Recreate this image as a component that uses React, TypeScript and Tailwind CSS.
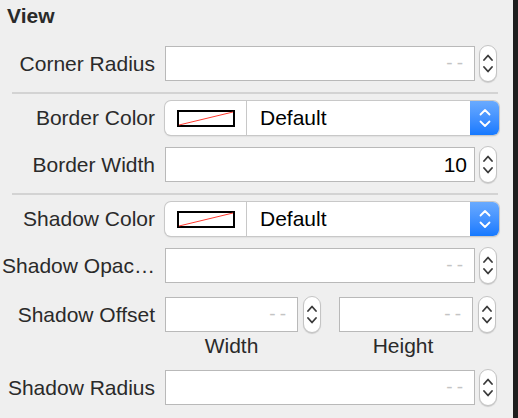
import React from "react"

const font = { fontFamily: '"Liberation Sans", Arial, sans-serif' }

function Stepper() {
  return (
    <div className="flex h-[37px] w-[18px] flex-col items-center justify-center gap-[5px] rounded-full border border-[#c4c4c4] bg-white shadow-[0_1px_1px_rgba(0,0,0,0.15)]">
      <svg width="10" height="7" viewBox="0 0 10 7">
        <path d="M1 6 L5 1.5 L9 6" fill="none" stroke="#3a3a3a" strokeWidth="1.8" strokeLinecap="round" strokeLinejoin="round" />
      </svg>
      <svg width="10" height="7" viewBox="0 0 10 7">
        <path d="M1 1 L5 5.5 L9 1" fill="none" stroke="#3a3a3a" strokeWidth="1.8" strokeLinecap="round" strokeLinejoin="round" />
      </svg>
    </div>
  )
}

function Field({ value, width = "w-[310px]" }: { value?: string; width?: string }) {
  return (
    <div className={`${width} flex h-[35px] items-center justify-end border border-[#b9b9b9] bg-white pr-[7px]`}>
      {value ? (
        <span className="text-[21px] text-black">{value}</span>
      ) : (
        <span className="text-[19px] tracking-[4px] text-[#c4c4c4]">--</span>
      )}
    </div>
  )
}

function Label({ text }: { text: string }) {
  return (
    <div className="w-[153px] shrink-0 whitespace-nowrap text-right text-[21px] text-[#2a2a2a]">{text}</div>
  )
}

function NumberRow({ label, value, className = "" }: { label: string; value?: string; className?: string }) {
  return (
    <div className={`flex items-center ${className}`}>
      <Label text={label} />
      <div className="ml-[10px] flex items-center gap-[4px]">
        <Field value={value} />
        <Stepper />
      </div>
    </div>
  )
}

function ColorRow({ label, className = "" }: { label: string; className?: string }) {
  return (
    <div className={`flex items-center ${className}`}>
      <Label text={label} />
      <div className="ml-[10px] flex h-[34px] w-[334px] rounded-[6px] bg-white shadow-[0_0_0_1px_#c8c8c8,0_1px_2px_rgba(0,0,0,0.2)]">
        <div className="flex w-[82px] items-center justify-center border-r border-[#c8c8c8]">
          <svg width="58" height="17" viewBox="0 0 58 17">
            <rect x="1" y="1" width="56" height="15" fill="white" stroke="black" strokeWidth="2" />
            <line x1="2" y1="15" x2="56" y2="2" stroke="#ff3b30" strokeWidth="1" />
          </svg>
        </div>
        <div className="flex flex-1 items-center pl-[13px] text-[21px] text-black">Default</div>
        <div className="flex w-[29px] flex-col items-center justify-center gap-[4px] rounded-r-[6px] bg-gradient-to-b from-[#69aafe] to-[#1479ff]">
          <svg width="12" height="8" viewBox="0 0 12 8">
            <path d="M1.5 6.5 L6 2 L10.5 6.5" fill="none" stroke="white" strokeWidth="1.8" strokeLinecap="round" strokeLinejoin="round" />
          </svg>
          <svg width="12" height="8" viewBox="0 0 12 8">
            <path d="M1.5 1.5 L6 6 L10.5 1.5" fill="none" stroke="white" strokeWidth="1.8" strokeLinecap="round" strokeLinejoin="round" />
          </svg>
        </div>
      </div>
    </div>
  )
}

function Separator({ className = "" }: { className?: string }) {
  return <div className={`ml-[12px] h-[2px] w-[486px] bg-[#d3d3d3] ${className}`} />
}

export default function App() {
  return (
    <div className="flex h-[418px] w-[518px] overflow-hidden bg-[#efefef]" style={font}>
      <div className="flex flex-1 flex-col">
        <div className="ml-[7px] mt-[4px] text-[21px] font-bold leading-[24px] text-[#2a2a2a]">View</div>
        <NumberRow label="Corner Radius" className="mt-[17px] pl-[2px]" />
        <Separator className="mt-[10px]" />
        <ColorRow label="Border Color" className="mt-[7px] pl-[2px]" />
        <NumberRow label="Border Width" value="10" className="mt-[11px] pl-[2px]" />
        <Separator className="mt-[10px]" />
        <ColorRow label="Shadow Color" className="mt-[7px] pl-[2px]" />
        <NumberRow label="Shadow Opac…" className="mt-[11px] pl-[2px]" />
        <div className="mt-[12px] flex items-start pl-[2px]">
          <div className="flex h-[37px] items-center">
            <Label text="Shadow Offset" />
          </div>
          <div className="ml-[10px] flex flex-col items-center">
            <div className="flex items-center gap-[5px]">
              <Field width="w-[133px]" />
              <Stepper />
            </div>
            <div className="mt-[1px] w-[133px] self-start text-center text-[21px] leading-[24px] text-[#2a2a2a]">Width</div>
          </div>
          <div className="ml-[18px] flex flex-col items-center">
            <div className="flex items-center gap-[5px]">
              <Field width="w-[134px]" />
              <Stepper />
            </div>
            <div className="mt-[1px] w-[134px] self-start pr-[6px] text-center text-[21px] leading-[24px] text-[#2a2a2a]">Height</div>
          </div>
        </div>
        <NumberRow label="Shadow Radius" className="mt-[11px] pl-[2px]" />
      </div>
      <div className="w-[5px] bg-[#1e1e1e]" />
    </div>
  )
}
